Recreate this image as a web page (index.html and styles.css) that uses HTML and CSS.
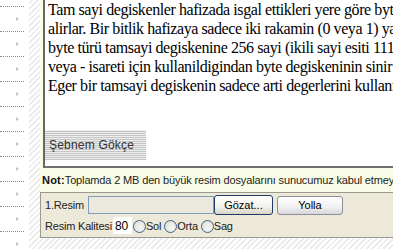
FILE: index.html
```html
<!DOCTYPE html>
<html lang="tr">
<head>
    <meta charset="UTF-8">
    <title>Makale</title>
    <link rel="stylesheet" href="styles.css">
</head>
<body>
    <div class="sidebar">
        <div class="menu-item"><span class="arrow"></span></div>
        <div class="menu-item"><span class="arrow"></span></div>
        <div class="menu-item"><span class="arrow"></span></div>
        <div class="menu-item"><span class="arrow"></span></div>
        <div class="menu-item"><span class="arrow"></span></div>
        <div class="menu-item"><span class="arrow"></span></div>
        <div class="menu-item"><span class="arrow"></span></div>
        <div class="menu-item"><span class="arrow"></span></div>
        <div class="menu-item"><span class="arrow"></span></div>
        <div class="menu-item"><span class="arrow"></span></div>
        <div class="menu-item"><span class="arrow"></span></div>
    </div>
    <div class="gutter"></div>

    <div class="main">
        <div class="content">
            <div class="article">
                <div class="article-text">
                    Tam sayi degiskenler hafizada isgal ettikleri yere göre byte, short, int ve long<br>
                    alirlar. Bir bitlik hafizaya sadece iki rakamin (0 veya 1) yazilabildigini<br>
                    byte türü tamsayi degiskenine 256 sayi (ikili sayi esiti 11111111)<br>
                    veya - isareti için kullanildigindan byte degiskeninin sinir degerleri<br>
                    Eger bir tamsayi degiskenin sadece arti degerlerini kullanmak
                </div>
                <div class="author">Şebnem Gökçe</div>
            </div>
        </div>

        <div class="note"><b>Not:</b>Toplamda 2 MB den büyük resim dosyalarını sunucumuz kabul etmeyecektir.</div>

        <form class="upload">
            <div class="upload-row">
                <span class="label">1.Resim</span>
                <span class="file-field"></span>
                <button type="button" class="btn btn-browse">Gözat...</button>
                <button type="button" class="btn btn-send">Yolla</button>
            </div>
            <div class="upload-row">
                <span class="label">Resim Kalitesi</span>
                <input class="quality" type="text" value="80">
                <label class="radio"><span class="radio-dot"></span>Sol</label>
                <label class="radio"><span class="radio-dot"></span>Orta</label>
                <label class="radio"><span class="radio-dot"></span>Sag</label>
            </div>
        </form>
    </div>
</body>
</html>
```

FILE: styles.css
```css
body {
    margin: 0;
    height: 249px;
    overflow: hidden;
    display: flex;
    background: repeating-linear-gradient(135deg, #fff 0 2px, #ededed 2px 4px);
    font-family: 'Liberation Sans', Arial, sans-serif;
}

.sidebar {
    width: 29px;
    flex-shrink: 0;
    background: #fff;
    margin-top: -18px;
}

.menu-item {
    height: 24px;
    width: 24px;
    position: relative;
    border-bottom: 1px dotted #8a8a8a;
}

.arrow {
    position: absolute;
    left: 16px;
    top: 10px;
    width: 0;
    height: 0;
    border-top: 2.5px solid transparent;
    border-bottom: 2.5px solid transparent;
    border-left: 3px solid #c4c4c4;
}

.gutter {
    width: 11px;
    flex-shrink: 0;
}

.main {
    flex: 1;
    display: flex;
    flex-direction: column;
    min-width: 0;
}

.content {
    background: #f9fde8;
    padding-left: 3px;
}

.article {
    height: 166px;
    background: #fff;
    border-left: 2px solid #666;
    border-bottom: 2px solid #707070;
    display: flex;
    flex-direction: column;
}

.article-text {
    font-family: 'Liberation Serif', 'Times New Roman', serif;
    font-size: 16px;
    letter-spacing: -0.42px;
    line-height: 19px;
    color: #000;
    white-space: nowrap;
    overflow: hidden;
    padding-left: 3px;
}

.author {
    margin-top: auto;
    margin-bottom: 6px;
    width: 101px;
    height: 30px;
    line-height: 30px;
    padding-left: 4px;
    box-sizing: border-box;
    font-size: 12px;
    letter-spacing: 0.2px;
    color: #333;
    background: repeating-linear-gradient(#ececec 0 1px, #c6c6c6 1px 2px);
}

.note {
    background: #f9fde8;
    height: 24px;
    line-height: 24px;
    padding-left: 2px;
    font-size: 11px;
    letter-spacing: -0.15px;
    color: #222;
    white-space: nowrap;
    overflow: hidden;
}

.note b {
    color: #111;
    letter-spacing: 0.2px;
}

.upload {
    margin: 0;
    background: #ece9d8;
    border-top: 1px solid #9a9a90;
    border-bottom: 1px solid #9a9a90;
    border-left: 1px solid #9a9a90;
    padding: 2px 0 3px 4px;
    font-size: 11px;
    letter-spacing: -0.2px;
    color: #222;
}

.upload-row {
    display: flex;
    align-items: center;
    white-space: nowrap;
}

.upload-row + .upload-row {
    margin-top: 2px;
}

.label {
    margin-right: 4px;
}

.file-field {
    width: 124px;
    height: 16px;
    border: 1px solid #7f9db9;
    background: #ebe9de;
}

.btn {
    font-family: 'Liberation Sans', Arial, sans-serif;
    font-size: 11px;
    color: #000;
    padding: 0;
    border-radius: 3px;
    cursor: pointer;
}

.btn-browse {
    width: 59px;
    height: 20px;
    border: 1px solid #1c3d6c;
    background: linear-gradient(#ffffff, #f2f1ea 60%, #d8d4c6);
}

.btn-send {
    width: 66px;
    height: 19px;
    margin-left: 4px;
    border: 1px solid #8e8f99;
    background: linear-gradient(#ffffff, #f0f0f0 60%, #d6d6dc);
}

.quality {
    width: 19px;
    height: 17px;
    border: none;
    padding: 0 0 0 2px;
    margin: 0 1px 0 -3px;
    box-sizing: border-box;
    font-family: 'Liberation Sans', Arial, sans-serif;
    font-size: 12px;
    color: #000;
    background: #fff;
}

.radio {
    display: flex;
    align-items: center;
    margin-right: 3px;
}

.radio-dot {
    width: 11px;
    height: 11px;
    border: 1px solid #3d6591;
    border-radius: 50%;
    background: radial-gradient(circle at 60% 60%, #f8f8f4, #d8d8cf);
    margin-top: 2px;
}
```
